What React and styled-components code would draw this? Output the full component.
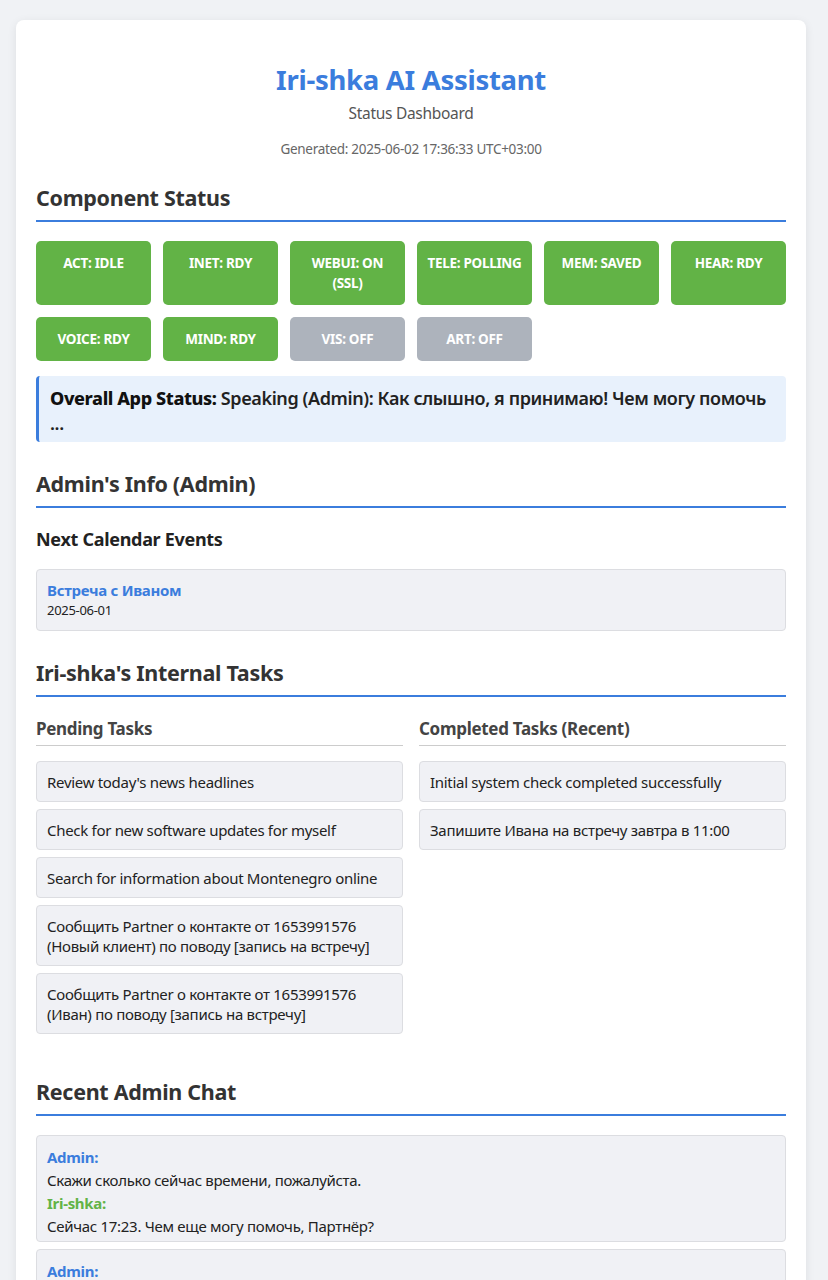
import React from "react";
import styled, { createGlobalStyle } from "styled-components";

const GlobalStyle = createGlobalStyle`
  body {
    margin: 0;
    background: #f0f2f5;
    font-family: "Segoe UI", "Noto Sans", sans-serif;
    color: #222;
  }
`;

const Page = styled.div`
  padding: 20px 22px 20px 16px;
`;

const Card = styled.div`
  background: #fff;
  border-radius: 8px;
  box-shadow: 0 2px 10px rgba(0, 0, 0, 0.08);
  padding: 42px 20px 20px;
`;

const Header = styled.header`
  text-align: center;
  margin-bottom: 26px;
`;

const Title = styled.h1`
  margin: 0;
  font-size: 27.5px;
  font-weight: 700;
  color: #3b7ddd;
  line-height: 36px;
  letter-spacing: -0.3px;
`;

const Subtitle = styled.p`
  margin: 5px 0 0;
  font-size: 15.5px;
  line-height: 20px;
  color: #555;
  letter-spacing: -0.3px;
`;

const Generated = styled.p`
  margin: 17px 0 0;
  font-size: 13.5px;
  line-height: 18px;
  color: #666;
  letter-spacing: -0.3px;
`;

const SectionTitle = styled.h2`
  margin: 0 0 19px;
  padding-bottom: 8px;
  font-size: 21.5px;
  line-height: 28px;
  font-weight: 700;
  color: #333;
  border-bottom: 2px solid #3b7ddd;
  letter-spacing: -0.3px;
`;

const Section = styled.section`
  margin-bottom: ${(p) => p.$gap || 28}px;
`;

const StatusGrid = styled.div`
  display: grid;
  grid-template-columns: repeat(6, 1fr);
  gap: 12px;
  margin-bottom: 15px;
`;

const StatusBadge = styled.div`
  background: ${(p) => (p.$on ? "#62b346" : "#adb3bc")};
  color: #fff;
  border-radius: 5px;
  padding: 12px 10px;
  text-align: center;
  font-size: 13.5px;
  font-weight: 700;
  line-height: 20px;
  letter-spacing: -0.3px;
`;

const OverallBox = styled.div`
  background: #e8f1fc;
  border-left: 3px solid #3b7ddd;
  border-radius: 4px;
  padding: 10px 12px 6px 11px;
  font-size: 18px;
  font-weight: 600;
  line-height: 25px;
  color: #222;
  letter-spacing: -0.4px;

  strong {
    font-weight: 800;
    color: #111;
  }
`;

const SubTitle = styled.h3`
  margin: 1px 0 18px;
  font-size: 18px;
  line-height: 24px;
  font-weight: 700;
  color: #222;
  letter-spacing: -0.3px;
`;

const ItemBox = styled.div`
  background: #f0f1f5;
  border: 1px solid #dcdde1;
  border-radius: 4px;
  padding: ${(p) => p.$pad || "10px 10px 9px"};
  font-size: 15px;
  line-height: ${(p) => p.$line || 20}px;
  color: #222;
  letter-spacing: -0.3px;
`;

const EventTitle = styled.div`
  color: #3b7ddd;
  font-weight: 700;
`;

const EventDate = styled.div`
  font-size: 13px;
  color: #222;
`;

const Columns = styled.div`
  display: grid;
  grid-template-columns: 1fr 1fr;
  gap: 16px;
`;

const ColumnTitle = styled.h4`
  margin: 2px 0 15px;
  padding-bottom: 5px;
  font-size: 17px;
  line-height: 22px;
  font-weight: 700;
  color: #444;
  border-bottom: 1px solid #ccc;
  letter-spacing: -0.3px;
`;

const List = styled.div`
  display: flex;
  flex-direction: column;
  gap: 7px;
`;

const Speaker = styled.div`
  font-weight: 700;
  color: ${(p) => (p.$bot ? "#62b346" : "#3b7ddd")};
`;

const statuses = [
  { label: "ACT: IDLE", on: true },
  { label: "INET: RDY", on: true },
  { label: "WEBUI: ON (SSL)", on: true },
  { label: "TELE: POLLING", on: true },
  { label: "MEM: SAVED", on: true },
  { label: "HEAR: RDY", on: true },
  { label: "VOICE: RDY", on: true },
  { label: "MIND: RDY", on: true },
  { label: "VIS: OFF", on: false },
  { label: "ART: OFF", on: false },
];

const pending = [
  "Review today's news headlines",
  "Check for new software updates for myself",
  "Search for information about Montenegro online",
  "Сообщить Partner о контакте от 1653991576 (Новый клиент) по поводу [запись на встречу]",
  "Сообщить Partner о контакте от 1653991576 (Иван) по поводу [запись на встречу]",
];

const completed = [
  "Initial system check completed successfully",
  "Запишите Ивана на встречу завтра в 11:00",
];

const chats = [
  [
    { who: "Admin", text: "Скажи сколько сейчас времени, пожалуйста." },
    { who: "Iri-shka", bot: true, text: "Сейчас 17:23. Чем еще могу помочь, Партнёр?" },
  ],
  [
    { who: "Admin", text: "Привет, как слышно?" },
    { who: "Iri-shka", bot: true, text: "Как слышно, я принимаю! Чем могу помочь ..." },
  ],
];

const App = () => {
  return (
    <Page>
      <GlobalStyle />
      <Card>
        <Header>
          <Title>Iri-shka AI Assistant</Title>
          <Subtitle>Status Dashboard</Subtitle>
          <Generated>Generated: 2025-06-02 17:36:33 UTC+03:00</Generated>
        </Header>

        <Section $gap={28}>
          <SectionTitle>Component Status</SectionTitle>
          <StatusGrid>
            {statuses.map((s) => (
              <StatusBadge key={s.label} $on={s.on}>
                {s.label}
              </StatusBadge>
            ))}
          </StatusGrid>
          <OverallBox>
            <strong>Overall App Status:</strong> Speaking (Admin): Как слышно, я
            принимаю! Чем могу помочь ...
          </OverallBox>
        </Section>

        <Section $gap={28}>
          <SectionTitle>Admin's Info (Admin)</SectionTitle>
          <SubTitle>Next Calendar Events</SubTitle>
          <ItemBox $pad="10px 10px 10px">
            <EventTitle>Встреча с Иваном</EventTitle>
            <EventDate>2025-06-01</EventDate>
          </ItemBox>
        </Section>

        <Section $gap={44}>
          <SectionTitle>Iri-shka's Internal Tasks</SectionTitle>
          <Columns>
            <div>
              <ColumnTitle>Pending Tasks</ColumnTitle>
              <List>
                {pending.map((t) => (
                  <ItemBox key={t}>{t}</ItemBox>
                ))}
              </List>
            </div>
            <div>
              <ColumnTitle>Completed Tasks (Recent)</ColumnTitle>
              <List>
                {completed.map((t) => (
                  <ItemBox key={t}>{t}</ItemBox>
                ))}
              </List>
            </div>
          </Columns>
        </Section>

        <Section>
          <SectionTitle>Recent Admin Chat</SectionTitle>
          <List>
            {chats.map((c, i) => (
              <ItemBox key={i} $pad="10px 10px 3px" $line={23}>
                {c.map((m, j) => (
                  <div key={j}>
                    <Speaker $bot={m.bot}>{m.who}:</Speaker>
                    <div>{m.text}</div>
                  </div>
                ))}
              </ItemBox>
            ))}
          </List>
        </Section>
      </Card>
    </Page>
  );
};

export default App;
